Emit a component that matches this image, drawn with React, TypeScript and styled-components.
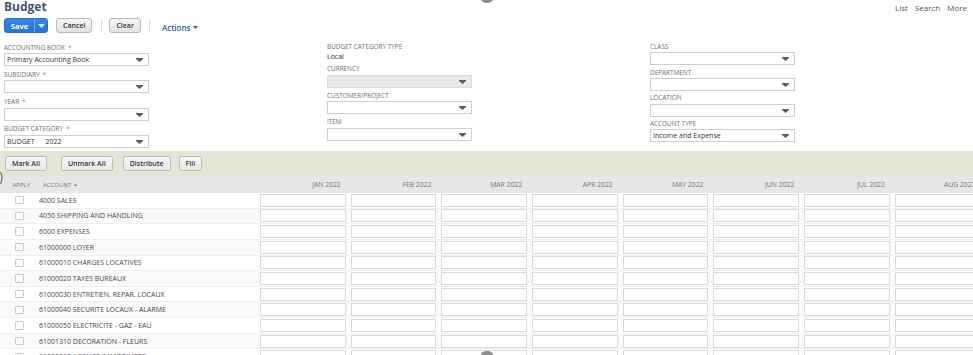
import React from "react";
import styled, { createGlobalStyle } from "styled-components";

const GlobalStyle = createGlobalStyle`
  html, body { margin: 0; padding: 0; background: #fff; }
  body {
    font-family: "Open Sans", "Liberation Sans", Arial, sans-serif;
    width: 973px;
    height: 355px;
    overflow: hidden;
  }
  * { box-sizing: border-box; }
`;

const Page = styled.div`
  position: relative;
  width: 973px;
  height: 355px;
  overflow: hidden;
`;

/* ---------- top bar ---------- */
const TopBar = styled.header`
  display: flex;
  justify-content: space-between;
  align-items: flex-start;
  padding: 0 6px 0 4px;
`;

const TitleBlock = styled.div`
  display: flex;
  flex-direction: column;
`;

const Title = styled.h1`
  margin: 0;
  font-size: 12px;
  line-height: 13.5px;
  font-weight: 700;
  color: #44546f;
`;

const ButtonBar = styled.div`
  display: flex;
  align-items: center;
  margin-top: 4.5px;
  height: 15px;
`;

const SplitButton = styled.div`
  display: flex;
  height: 15px;
  border-radius: 3px;
  overflow: hidden;
  background: linear-gradient(#3587e6, #2176da);
  border: 1px solid #1f6cc9;
`;

const SplitMain = styled.span`
  width: 29px;
  display: flex;
  align-items: center;
  justify-content: center;
  color: #fff;
  font-size: 7.5px;
  font-weight: 700;
`;

const SplitArrow = styled.span`
  width: 13px;
  display: flex;
  align-items: center;
  justify-content: center;
  border-left: 1px solid #6aa8ee;
`;

const GrayButton = styled.span<{ $ml?: number }>`
  display: inline-flex;
  align-items: center;
  justify-content: center;
  height: 15px;
  padding: 0 6px;
  margin-left: ${(p) => p.$ml ?? 0}px;
  border: 1px solid #b9b9b9;
  border-radius: 3px;
  background: linear-gradient(#f4f4f4, #e3e3e3);
  color: #333;
  font-size: 7px;
  font-weight: 600;
`;

const Divider = styled.span<{ $ml: number; $mr: number }>`
  width: 1px;
  height: 11px;
  background: #d8d8d8;
  margin: 0 ${(p) => p.$mr}px 0 ${(p) => p.$ml}px;
`;

const ActionsLink = styled.span`
  display: inline-flex;
  align-items: center;
  gap: 3px;
  padding-top: 4px;
  color: #2a5ea8;
  font-size: 8px;
  font-weight: 600;
`;

const NavLinks = styled.nav`
  display: flex;
  gap: 7px;
  margin-top: 3px;
  font-size: 8px;
  line-height: 10px;
  color: #555;
`;

/* ---------- form ---------- */
const Form = styled.section`
  display: grid;
  grid-template-columns: 323px 323px 323px;
  align-items: start;
  padding-left: 4px;
  margin-top: 10px;
`;

const Column = styled.div<{ $gap: number; $top?: number }>`
  display: flex;
  flex-direction: column;
  gap: ${(p) => p.$gap}px;
  margin-top: ${(p) => p.$top ?? 0}px;
`;

const Field = styled.div`
  display: flex;
  flex-direction: column;
`;

const Label = styled.label`
  display: block;
  height: 8px;
  line-height: 8px;
  margin-bottom: 1.5px;
  font-size: 6.4px;
  color: #6e6e6e;
  text-transform: uppercase;
  white-space: nowrap;
`;

const Required = styled.span`
  color: #e8901f;
  margin-left: 3px;
  font-size: 7px;
`;

const StaticValue = styled.div`
  height: 9px;
  line-height: 9px;
  font-size: 7px;
  color: #333;
  margin-top: -1px;
  margin-bottom: 0.5px;
`;

const SelectBox = styled.div<{ $disabled?: boolean }>`
  position: relative;
  width: 145px;
  height: 13px;
  border: 1px solid ${(p) => (p.$disabled ? "#dcdcdc" : "#cfcfcf")};
  background: ${(p) => (p.$disabled ? "#e9e9e9" : "#fff")};
  display: flex;
  align-items: center;
  padding-left: 2px;
  font-size: 7px;
  color: #333;
  white-space: pre;
`;

const SelectArrow = styled.svg`
  position: absolute;
  right: 5px;
  top: 4px;
`;

/* ---------- table ---------- */
const Toolbar = styled.div`
  display: flex;
  align-items: center;
  height: 25.5px;
  margin-top: 3px;
  padding-left: 5px;
  background: #e4e6d5;
`;

const ToolButton = styled.span<{ $ml: number }>`
  display: inline-flex;
  align-items: center;
  height: 14.5px;
  padding: 0 6px;
  margin-left: ${(p) => p.$ml}px;
  border: 1px solid #bdbdbd;
  border-radius: 2px;
  background: linear-gradient(#f7f7f7, #e9e9e9);
  color: #333;
  font-size: 7px;
  font-weight: 600;
`;

const gridCols = "35px 221px repeat(8, 90.7px)";

const HeaderRow = styled.div`
  display: grid;
  grid-template-columns: ${gridCols};
  align-items: center;
  width: 982px;
  height: 16.5px;
  background: #e6e6e6;
  font-size: 6px;
  color: #777;
  text-transform: uppercase;
  white-space: nowrap;
`;

const HeadCell = styled.div<{ $align?: "left" | "right"; $pl?: number }>`
  text-align: ${(p) => p.$align ?? "left"};
  padding-left: ${(p) => p.$pl ?? 0}px;
  padding-right: ${(p) => (p.$align === "right" ? 6 : 0)}px;
  font-size: ${(p) => (p.$align === "right" ? 6.8 : 6)}px;
`;

const SortMark = styled.span`
  font-size: 4.5px;
  margin-left: 2px;
  vertical-align: 1px;
`;

const Row = styled.div<{ $alt: boolean }>`
  display: grid;
  grid-template-columns: ${gridCols};
  align-items: center;
  width: 982px;
  height: 15.67px;
  background: ${(p) => (p.$alt ? "#fafafa" : "#fff")};
  border-bottom: 1px solid #efefef;
`;

const ApplyCell = styled.div`
  padding-left: 15px;
  display: flex;
  align-items: center;
`;

const CheckBox = styled.span`
  width: 9px;
  height: 8.5px;
  border: 1px solid #cdcdcd;
  background: #fff;
  border-radius: 1px;
`;

const AccountCell = styled.div`
  padding-left: 4px;
  font-size: 7px;
  color: #474747;
  text-transform: uppercase;
  white-space: nowrap;
`;

const AmountCell = styled.div`
  padding-left: 4px;
  display: flex;
  align-items: center;
`;

const AmountInput = styled.input`
  width: 85.5px;
  height: 12.8px;
  border: 1px solid #dadada;
  background: #fff;
  padding: 0;
  margin: 0;
  outline: none;
`;

/* ---------- overlay artifacts ---------- */
const Blob = styled.span<{ $top?: number; $bottom?: number }>`
  position: absolute;
  left: 481px;
  ${(p) => (p.$top !== undefined ? `top: ${p.$top}px;` : "")}
  ${(p) => (p.$bottom !== undefined ? `bottom: ${p.$bottom}px;` : "")}
  width: 12px;
  height: 8px;
  border-radius: 50%;
  background: #8d8d8d;
`;

const EdgeArc = styled.svg`
  position: absolute;
  left: 0;
  top: 171px;
`;

const Caret = () => (
  <svg width="7" height="4" viewBox="0 0 7 4">
    <polygon points="0,0 7,0 3.5,4" fill="#ffffff" opacity="0.85" />
  </svg>
);

const Arrow = () => (
  <SelectArrow width="7" height="4" viewBox="0 0 7 4">
    <polygon points="0,0 7,0 7,1 3.5,4 0,1" fill="#4f5f7b" />
  </SelectArrow>
);

const Select: React.FC<{ value?: string; disabled?: boolean }> = ({ value, disabled }) => (
  <SelectBox $disabled={disabled}>
    {value}
    <Arrow />
  </SelectBox>
);

const FormField: React.FC<{ label: string; required?: boolean; value?: string; disabled?: boolean }> = ({
  label,
  required,
  value,
  disabled,
}) => (
  <Field>
    <Label>
      {label}
      {required && <Required>*</Required>}
    </Label>
    <Select value={value} disabled={disabled} />
  </Field>
);

const months = ["Jan", "Feb", "Mar", "Apr", "May", "Jun", "Jul", "Aug"].map((m) => `${m} 2022`);

const accounts = [
  "4000 Sales",
  "4050 Shipping and Handling",
  "6000 Expenses",
  "61000000 Loyer",
  "61000010 Charges Locatives",
  "61000020 Taxes Bureaux",
  "61000030 Entretien. Repar. Locaux",
  "61000040 Securite Locaux - Alarme",
  "61000050 Electricite - Gaz - Eau",
  "61001310 Decoration - Fleurs",
  "61000060 Agence Immobiliere",
  "61000070 Assurances",
];

export default function App() {
  return (
    <Page>
      <GlobalStyle />
      <TopBar>
        <TitleBlock>
          <Title>Budget</Title>
          <ButtonBar>
            <SplitButton>
              <SplitMain>Save</SplitMain>
              <SplitArrow>
                <Caret />
              </SplitArrow>
            </SplitButton>
            <GrayButton $ml={8}>Cancel</GrayButton>
            <Divider $ml={9} $mr={7} />
            <GrayButton>Clear</GrayButton>
            <Divider $ml={8} $mr={12} />
            <ActionsLink>
              Actions
              <svg width="5" height="3" viewBox="0 0 5 3">
                <polygon points="0,0 5,0 2.5,3" fill="#2a5ea8" />
              </svg>
            </ActionsLink>
          </ButtonBar>
        </TitleBlock>
        <NavLinks>
          <span>List</span>
          <span>Search</span>
          <span>More</span>
        </NavLinks>
      </TopBar>

      <Form>
        <Column $gap={4.8} $top={0.5}>
          <FormField label="Accounting Book" required value="Primary Accounting Book" />
          <FormField label="Subsidiary" required />
          <FormField label="Year" required />
          <FormField label="Budget Category" required value={"BUDGET      2022"} />
        </Column>
        <Column $gap={4.1}>
          <Field>
            <Label>Budget Category Type</Label>
            <StaticValue>Local</StaticValue>
          </Field>
          <FormField label="Currency" disabled />
          <FormField label="Customer/Project" />
          <FormField label="Item" />
        </Column>
        <Column $gap={3.2} $top={-0.2}>
          <FormField label="Class" />
          <FormField label="Department" />
          <FormField label="Location" />
          <FormField label="Account Type" value="Income and Expense" />
        </Column>
      </Form>

      <Toolbar>
        <ToolButton $ml={0}>Mark All</ToolButton>
        <ToolButton $ml={14}>Unmark All</ToolButton>
        <ToolButton $ml={10}>Distribute</ToolButton>
        <ToolButton $ml={8}>Fill</ToolButton>
      </Toolbar>

      <HeaderRow>
        <HeadCell $pl={12.5}>Apply</HeadCell>
        <HeadCell $pl={8}>
          Account<SortMark>▲</SortMark>
        </HeadCell>
        {months.map((m) => (
          <HeadCell key={m} $align="right">
            {m}
          </HeadCell>
        ))}
      </HeaderRow>

      {accounts.map((a, i) => (
        <Row key={a} $alt={i % 2 === 1}>
          <ApplyCell>
            <CheckBox />
          </ApplyCell>
          <AccountCell>{a}</AccountCell>
          {months.map((m) => (
            <AmountCell key={m}>
              <AmountInput readOnly aria-label={`${a} ${m}`} />
            </AmountCell>
          ))}
        </Row>
      ))}

      <Blob $top={-5} />
      <Blob $bottom={-4} />
      <EdgeArc width="4" height="14" viewBox="0 0 4 14">
        <path d="M0.5 1 Q3.5 7 0.5 13" stroke="#666" strokeWidth="1.2" fill="none" />
      </EdgeArc>
    </Page>
  );
}
